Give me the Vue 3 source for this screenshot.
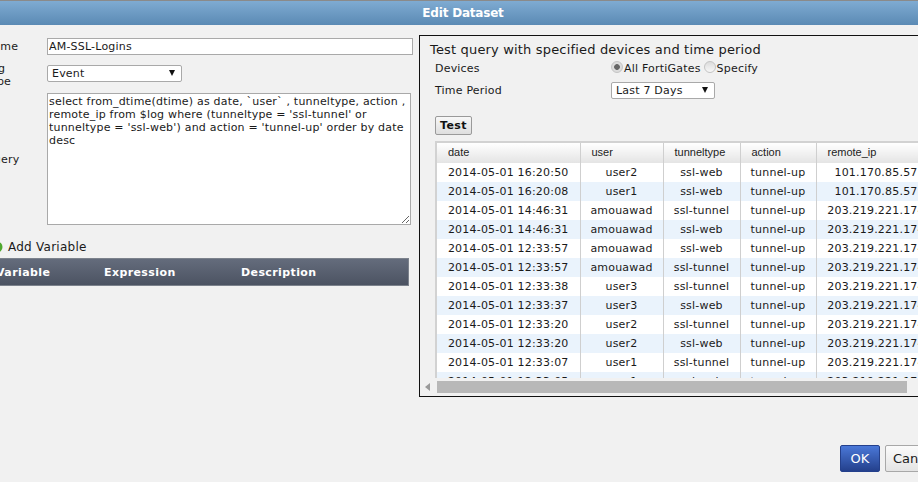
<script setup>
const rows = [
  ["2014-05-01 16:20:50", "user2", "ssl-web", "tunnel-up", "101.170.85.57"],
  ["2014-05-01 16:20:08", "user1", "ssl-web", "tunnel-up", "101.170.85.57"],
  ["2014-05-01 14:46:31", "amouawad", "ssl-tunnel", "tunnel-up", "203.219.221.174"],
  ["2014-05-01 14:46:31", "amouawad", "ssl-web", "tunnel-up", "203.219.221.174"],
  ["2014-05-01 12:33:57", "amouawad", "ssl-web", "tunnel-up", "203.219.221.174"],
  ["2014-05-01 12:33:57", "amouawad", "ssl-tunnel", "tunnel-up", "203.219.221.174"],
  ["2014-05-01 12:33:38", "user3", "ssl-tunnel", "tunnel-up", "203.219.221.174"],
  ["2014-05-01 12:33:37", "user3", "ssl-web", "tunnel-up", "203.219.221.174"],
  ["2014-05-01 12:33:20", "user2", "ssl-tunnel", "tunnel-up", "203.219.221.174"],
  ["2014-05-01 12:33:20", "user2", "ssl-web", "tunnel-up", "203.219.221.174"],
  ["2014-05-01 12:33:07", "user1", "ssl-tunnel", "tunnel-up", "203.219.221.174"],
  ["2014-05-01 12:33:05", "user1", "ssl-web", "tunnel-up", "203.219.221.174"],
]
const columns = ["date", "user", "tunneltype", "action", "remote_ip"]
const query =
  "select from_dtime(dtime) as date, `user` , tunneltype, action , remote_ip from $log where (tunneltype = 'ssl-tunnel' or tunneltype = 'ssl-web') and action = 'tunnel-up' order by date desc"
</script>

<template>
  <div class="dialog">
    <header class="title-bar">Edit Dataset</header>

    <main class="content">
      <section class="left">
        <div class="field field-name">
          <label>Name</label>
          <input class="text-input" type="text" value="AM-SSL-Logins" />
        </div>
        <div class="field field-type">
          <label>Log<br />Type</label>
          <div class="select select-type">
            Event
            <span class="arrow"></span>
          </div>
        </div>
        <div class="field field-query">
          <label>Query</label>
          <textarea class="query" :value="query"></textarea>
        </div>

        <div class="add-variable">
          <svg class="add-icon" width="12" height="12" viewBox="0 0 12 12">
            <circle cx="6" cy="6" r="5.5" fill="#4ea72e" />
            <circle cx="6" cy="6" r="3" fill="#86d65e" />
          </svg>
          Add Variable
        </div>
        <div class="variable-head">
          <span class="col-variable">Variable</span>
          <span class="col-expression">Expression</span>
          <span>Description</span>
        </div>
      </section>

      <section class="panel">
        <h2>Test query with specified devices and time period</h2>
        <div class="panel-row row-devices">
          <span class="panel-label">Devices</span>
          <span class="radio checked"></span>
          <span class="radio-text">All FortiGates</span>
          <span class="radio"></span>
          <span class="radio-text">Specify</span>
        </div>
        <div class="panel-row row-time">
          <span class="panel-label">Time Period</span>
          <div class="select select-time">
            Last 7 Days
            <span class="arrow"></span>
          </div>
        </div>
        <button type="button" class="test-button">Test</button>

        <div class="grid-wrap">
          <div class="grid-clip">
            <table class="grid">
              <colgroup>
                <col style="width: 143px" />
                <col style="width: 83px" />
                <col style="width: 77px" />
                <col style="width: 76px" />
                <col style="width: 120px" />
              </colgroup>
              <thead>
                <tr>
                  <th v-for="col in columns" :key="col">{{ col }}</th>
                </tr>
              </thead>
              <tbody>
                <tr v-for="(row, i) in rows" :key="i">
                  <td v-for="(cell, j) in row" :key="j">{{ cell }}</td>
                </tr>
              </tbody>
            </table>
          </div>
          <div class="h-scroll">
            <span class="scroll-left"></span>
            <span class="scroll-thumb"></span>
          </div>
        </div>
      </section>
    </main>

    <footer class="footer">
      <button type="button" class="btn btn-ok">OK</button>
      <button type="button" class="btn btn-cancel">Cancel</button>
    </footer>
  </div>
</template>

<style>
html,
body {
  margin: 0;
  overflow: hidden;
}
</style>

<style scoped>
.dialog {
  display: flex;
  flex-direction: column;
  width: 918px;
  height: 482px;
  overflow: hidden;
  background: #f1f1f1;
  color: #1a1a1a;
  font-family: "DejaVu Sans", Verdana, sans-serif;
  font-size: 11px;
  letter-spacing: 0.2px;
}

.title-bar {
  flex: none;
  height: 24px;
  padding-left: 8px;
  border-top: 1px solid #8a8a8a;
  background: linear-gradient(#7fabd2, #5b8ab4);
  color: #fff;
  font-size: 12px;
  font-weight: 700;
  letter-spacing: -0.2px;
  line-height: 25px;
  text-align: center;
}

.content {
  display: flex;
  flex: 1;
  align-items: flex-start;
  min-height: 0;
  padding-top: 10px;
}

.left {
  flex: none;
  width: 428px;
  margin-left: -15px;
  margin-right: 6px;
}

.field {
  display: flex;
}

.field label {
  flex: none;
  width: 62px;
}

.field-name {
  align-items: center;
  margin-top: 3px;
}

.field-type {
  align-items: flex-start;
  margin-top: 7px;
}

.field-type label {
  line-height: 13px;
}

.select-type {
  margin-top: 3px;
}

.field-query {
  align-items: center;
  margin-top: 5px;
}

.text-input {
  box-sizing: border-box;
  width: 366px;
  height: 17px;
  padding: 0 1px;
  border: 1px solid #a9a9a9;
  background: #fff;
  color: #1a1a1a;
  font: inherit;
  letter-spacing: inherit;
  outline: none;
}

.select {
  position: relative;
  box-sizing: border-box;
  height: 17px;
  padding-left: 4px;
  border: 1px solid #a9a9a9;
  border-radius: 2px;
  background: #fff;
  line-height: 16px;
}

.select-type {
  width: 135px;
}

.select-time {
  width: 104px;
}

.arrow {
  position: absolute;
  top: 4px;
  right: 6px;
  border-top: 6px solid #111;
  border-left: 3.5px solid transparent;
  border-right: 3.5px solid transparent;
}

.query {
  display: block;
  box-sizing: border-box;
  width: 364px;
  height: 132px;
  padding: 1px;
  border: 1px solid #a9a9a9;
  background: #fff;
  color: #1a1a1a;
  font: inherit;
  letter-spacing: inherit;
  line-height: 13px;
  outline: none;
}

.add-variable {
  display: flex;
  align-items: center;
  gap: 5px;
  margin-top: 15px;
  margin-left: 6px;
  font-size: 12px;
  letter-spacing: 0.25px;
  line-height: 14px;
}

.variable-head {
  display: flex;
  align-items: center;
  box-sizing: border-box;
  width: 424px;
  height: 28px;
  margin-top: 4px;
  border: 1px solid #7c828c;
  background: linear-gradient(#646c7c, #4c5362);
  color: #fff;
  font-weight: 700;
  letter-spacing: 0.4px;
}

.col-variable {
  width: 118px;
  padding-left: 10px;
  box-sizing: border-box;
}

.col-expression {
  width: 137px;
}

.panel {
  flex: none;
  box-sizing: border-box;
  width: 520px;
  height: 362px;
  padding: 6px 0 0 10px;
  border: 1px solid #111;
}

h2 {
  margin: 0;
  color: #1a1a1a;
  font-size: 13px;
  font-weight: 400;
  letter-spacing: 0.17px;
  line-height: 16px;
}

.panel-row {
  display: flex;
  align-items: center;
  height: 18px;
  padding-left: 5px;
}

.row-devices {
  margin-top: 1px;
}

.row-time {
  margin-top: 4px;
}

.panel-label {
  flex: none;
  width: 176px;
}

.radio {
  box-sizing: border-box;
  width: 12px;
  height: 12px;
  margin-top: -3px;
  margin-right: 1px;
  border: 1px solid #c4c4c4;
  border-radius: 50%;
  background: linear-gradient(#dcdcdc, #f7f7f7);
}

.radio.checked {
  background: radial-gradient(circle, #666 0 2.5px, #dcdcdc 3.2px);
}

.radio-text {
  margin-right: 3px;
}

.test-button {
  display: block;
  box-sizing: border-box;
  width: 37px;
  height: 19px;
  margin: 17px 0 0 5px;
  padding: 0;
  border: 1px solid #9a9a9a;
  border-radius: 2px;
  background: linear-gradient(#f8f8f8, #dedede);
  color: #111;
  font: inherit;
  font-weight: 700;
  letter-spacing: 0.4px;
}

.grid-wrap {
  margin: 6px 0 0 5px;
}

.grid-clip {
  height: 235px;
  overflow: hidden;
  border-top: 2px solid #d2d2d2;
  border-left: 2px solid #d2d2d2;
}

.grid {
  width: 499px;
  border-collapse: collapse;
  table-layout: fixed;
  background: #fff;
}

.grid th {
  box-sizing: border-box;
  height: 20px;
  padding: 0 0 3px 11px;
  border-right: 1px solid #cfcfcf;
  background: linear-gradient(#fff, #e4e4e4);
  color: #222;
  font-family: "Liberation Sans", Arial, sans-serif;
  font-size: 11px;
  font-weight: 400;
  letter-spacing: 0;
  text-align: left;
}

.grid td {
  box-sizing: border-box;
  height: 19px;
  padding: 0;
  border-right: 1px solid #cfcfcf;
  text-align: center;
  white-space: nowrap;
}

.grid tbody tr:nth-child(even) td {
  background: #eaf3fc;
}

.h-scroll {
  display: flex;
  align-items: center;
  height: 18px;
  margin-left: -16px;
}

.scroll-left {
  flex: none;
  width: 0;
  height: 0;
  margin: 0 7px 0 6px;
  border-top: 4px solid transparent;
  border-bottom: 4px solid transparent;
  border-right: 5px solid #9a9a9a;
}

.scroll-thumb {
  flex: none;
  width: 470px;
  height: 12px;
  background: #b8b8b8;
}

.footer {
  display: flex;
  flex: none;
  gap: 5px;
  height: 37px;
  padding-left: 840px;
}

.btn {
  flex: none;
  box-sizing: border-box;
  height: 27px;
  padding: 0;
  border-radius: 2px;
  font-family: inherit;
  font-size: 13px;
}

.btn-ok {
  width: 40px;
  border: 1px solid #24408c;
  background: linear-gradient(#4a78d8, #24408c);
  color: #fff;
}

.btn-cancel {
  width: 60px;
  border: 1px solid #a8a8a8;
  background: linear-gradient(#fbfbfb, #e4e4e4);
  color: #1a1a1a;
}
</style>
